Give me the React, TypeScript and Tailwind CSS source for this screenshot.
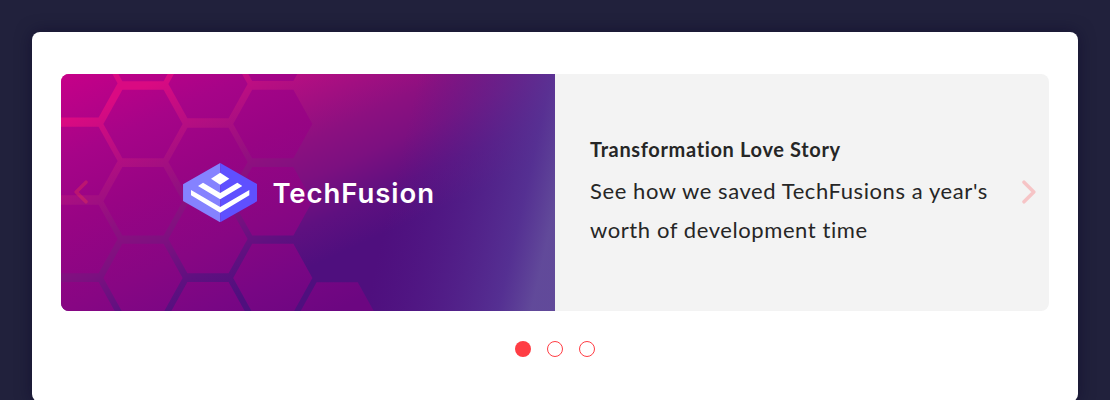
const HEXAGONS: [number, number][] = [
  [17, 9.3], [17, 87], [17, 165], [17, 242.3],
  [82, -27], [82, 50], [82, 127.3], [82, 204],
  [147, 10], [147, 88], [147, 165], [147, 242.3],
  [211.8, -27.3], [211.8, 50], [211.8, 127.3], [211.8, 204],
  [276.2, 242.5],
];

function hexPoints(cx: number, cy: number) {
  return [
    [cx - 39.6, cy], [cx - 20.6, cy - 34.3], [cx + 20.6, cy - 34.3],
    [cx + 39.6, cy], [cx + 20.6, cy + 34.3], [cx - 20.6, cy + 34.3],
  ].map((p) => p.join(",")).join(" ");
}

function HoneycombArt() {
  return (
    <svg className="absolute inset-0 h-full w-full" viewBox="0 0 494 237" preserveAspectRatio="none" aria-hidden="true">
      <defs>
        <linearGradient id="base" gradientUnits="userSpaceOnUse" x1="0" y1="0" x2="123" y2="273">
          <stop offset="0.15" stopColor="#da0a82" />
          <stop offset="0.31" stopColor="#b80e82" />
          <stop offset="0.54" stopColor="#8c1080" />
          <stop offset="0.66" stopColor="#7c1080" />
          <stop offset="0.8" stopColor="#5f1080" />
          <stop offset="0.93" stopColor="#4f0f7e" />
        </linearGradient>
        <linearGradient id="haze" gradientUnits="userSpaceOnUse" x1="342" y1="70" x2="500" y2="106">
          <stop offset="0" stopColor="#50208a" stopOpacity="0" />
          <stop offset="0.8" stopColor="#563696" stopOpacity="0.84" />
          <stop offset="1" stopColor="#624c9b" stopOpacity="0.96" />
        </linearGradient>
        <linearGradient id="cell" gradientUnits="userSpaceOnUse" x1="0" y1="0" x2="135" y2="300">
          <stop offset="0" stopColor="#c60088" />
          <stop offset="0.24" stopColor="#a60488" />
          <stop offset="0.42" stopColor="#980484" />
          <stop offset="0.66" stopColor="#870683" />
          <stop offset="0.84" stopColor="#780684" />
          <stop offset="1" stopColor="#6c0681" />
        </linearGradient>
      </defs>
      <rect width="494" height="237" fill="url(#base)" />
      <rect width="494" height="237" fill="url(#haze)" />
      {HEXAGONS.map(([cx, cy]) => (
        <polygon key={`${cx}-${cy}`} points={hexPoints(cx, cy)} fill="url(#cell)" />
      ))}
    </svg>
  );
}

function FusionMark() {
  return (
    <svg className="h-[59.3px] w-[74.7px] shrink-0" viewBox="38 38 224 178" aria-hidden="true">
      <path d="M149.5 38 38 102v50l111.500 64z" fill="#8582ff" />
      <path d="M149.500 38 262 102v50l-112.500 64z" fill="#5f50ff" />
      <path d="M149.500 67 177 85l-27.500 18L122 85z" fill="#fff" />
      <path d="M98 97l51.500 31L201 97l15 10-66.500 40L83 107z" fill="#fff" />
      <path d="M62 119l87.500 51L237 119v16l-87.500 52L62 135z" fill="#fff" />
    </svg>
  );
}

function Chevron({ flip = false }: { flip?: boolean }) {
  return (
    <svg
      className={flip ? "h-6 w-3.5 rotate-180" : "h-6 w-3.5"}
      viewBox="0 0 14 24"
      fill="none"
      stroke="#ff3d44"
      strokeWidth="3.5"
      strokeLinecap="round"
      strokeLinejoin="round"
      aria-hidden="true"
    >
      <path d="M2 2.200 11.800 12 2 21.800" />
    </svg>
  );
}

export default function App() {
  return (
    <main className="h-[400px] overflow-hidden bg-[#21213c] px-8 pt-8">
      <section className="h-[370px] rounded-lg bg-white px-[29px] pt-[42px] shadow-[0_0_16px_rgba(10,5,40,0.5)]">
        <div className="relative">
          <article className="flex h-[237px] overflow-hidden rounded-lg bg-[#f3f3f3]">
            <div className="relative flex w-1/2 overflow-hidden">
              <HoneycombArt />
              <div className="relative flex h-full items-center pl-[121.700px]">
                <FusionMark />
                <span className="ml-[15px] whitespace-nowrap pt-px font-['Inter',sans-serif] text-[27.5px] font-semibold leading-8 tracking-[0.95px] text-white">
                  TechFusion
                </span>
              </div>
            </div>
            <div className="flex w-1/2 flex-col pl-[35px] pt-[60px] font-['Lato',sans-serif] text-[#262626]">
              <h2 className="whitespace-nowrap text-[20px] font-bold leading-[30px] tracking-[0.650px]">Transformation Love Story</h2>
              <p className="mt-[7px] whitespace-nowrap text-[22px] leading-[39px] tracking-[0.580px]">
                See how we saved TechFusions a year's
                <br />
                worth of development time
              </p>
            </div>
          </article>
          <button aria-label="Previous" className="absolute left-[13px] top-[106px] opacity-30">
            <Chevron flip />
          </button>
          <button aria-label="Next" className="absolute right-[13px] top-[106px] opacity-25">
            <Chevron />
          </button>
        </div>
        <div className="mt-[30px] flex justify-center gap-4">
          <span className="size-4 rounded-full bg-[#ff3d44]" />
          <span className="size-4 rounded-full border border-[#ff3d44]" />
          <span className="size-4 rounded-full border border-[#ff3d44]" />
        </div>
      </section>
    </main>
  );
}
